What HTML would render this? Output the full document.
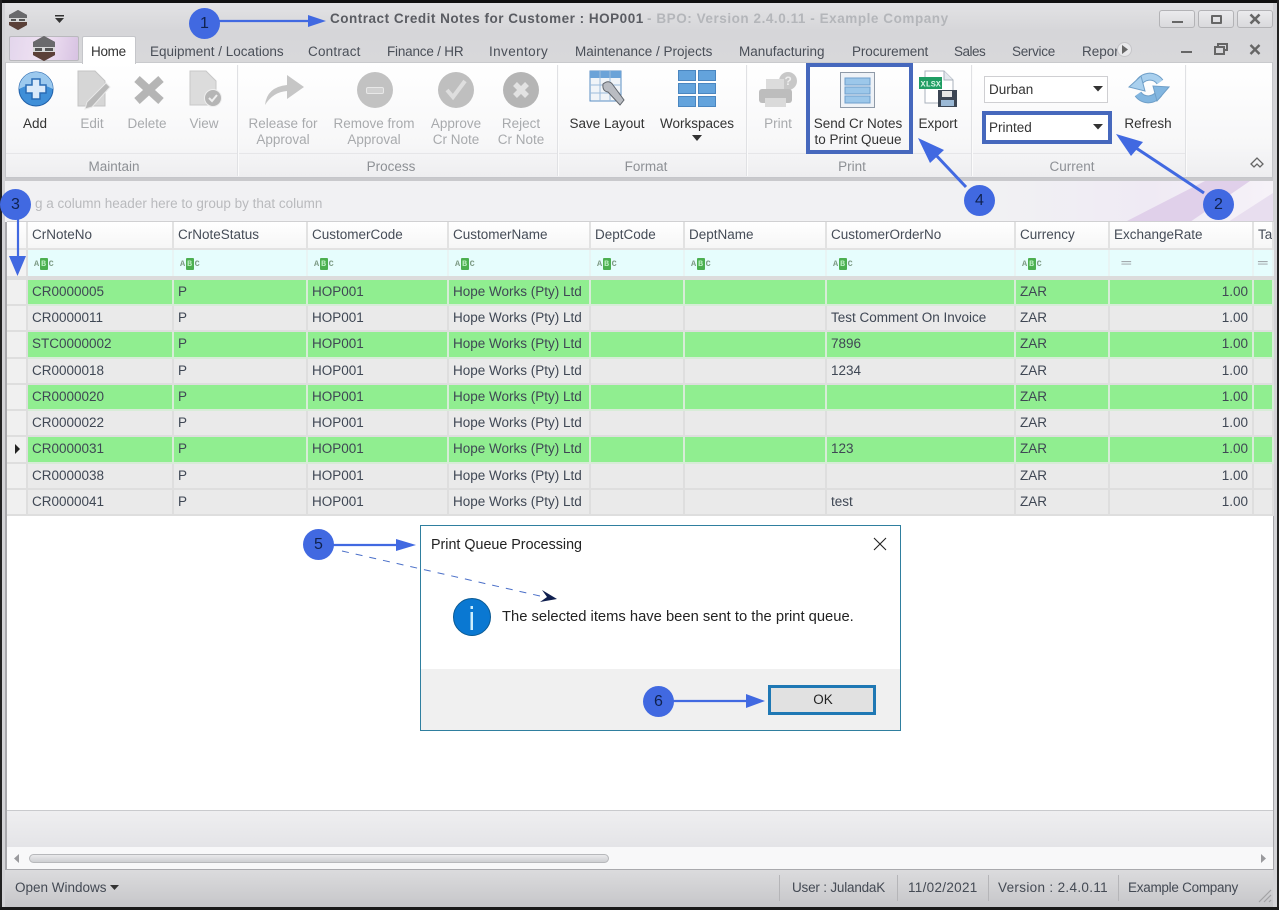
<!DOCTYPE html>
<html><head><meta charset="utf-8"><title>Contract Credit Notes</title>
<style>
*{box-sizing:border-box}
html,body{margin:0;padding:0}
body{width:1279px;height:910px;position:relative;overflow:hidden;background:#fff;font-family:"Liberation Sans",sans-serif;font-size:13.5px;color:#3e4652}
#w{position:absolute;left:0;top:0;width:1279px;height:910px;overflow:hidden;filter:blur(.3px)}
.a{position:absolute}
.t{position:absolute;white-space:nowrap;line-height:16px}
.c{position:absolute;white-space:nowrap;line-height:16px;text-align:center;transform:translateX(-50%)}
.g{color:#a8aaad}
.gl{color:#8d9095}
.sep{position:absolute;top:65px;width:2px;height:111px;background:#e0e1e4;border-right:1px solid #fbfbfb}
.tab{position:absolute;top:44px;line-height:16px;white-space:nowrap;color:#4a4f58}
table{position:absolute;left:7px;top:222px;width:1266px;border-collapse:collapse;table-layout:fixed;font-size:13.5px}
td{padding:0 0 0 4px;border:1px solid #dcdcdc;border-width:0 2px 2px 0;white-space:nowrap;overflow:hidden;height:26.25px;line-height:24px;color:#3f4754}
tr.h td{height:27px;background:linear-gradient(#fff,#f6f6f6);border-color:#e2e2e2;color:#454c57}
tr.f td{height:29px;background:#e6fdfd;border-color:#e8f4f4;border-bottom:4px solid #dcdcdc}
tr.y td{background:#90ee90;border-color:#d7ecd7}
tr.n td{background:#eaeaea;border-color:#dedede}
td.i{background:#f0f0f0!important;border-color:#dedede!important}
td.r{text-align:right;padding-right:4px}
.abc{display:inline-block;font:bold 8.5px/12px "Liberation Mono",monospace;color:#7d9a84;vertical-align:1px;margin-left:2px;letter-spacing:-.5px}
.abc b{display:inline-block;background:#4caf50;color:#b9ecbf;width:8px;height:12px;text-align:center;border-radius:1px;margin:0 1px;letter-spacing:0}
.num{position:absolute;width:31px;height:31px;border-radius:50%;background:#4169e1;color:#10224f;text-align:center;line-height:31px;font-size:16px}
</style></head><body><div id="w">

<!-- window chrome -->
<div class="a" style="left:0;top:0;width:1279px;height:30px;background:linear-gradient(#e4e4e6,#d6d6d9)"></div>
<div class="a" style="left:0;top:30px;width:1279px;height:33px;background:linear-gradient(#d6d6d9,#d8d8da)"></div>
<div class="a" style="left:5px;top:62px;width:1268px;height:116px;background:linear-gradient(#fff,#f7f7f8 70%,#eeeef0);border:1px solid #c5c6ca;border-top:1px solid #c9cacd"></div>
<div class="a" style="left:6px;top:153px;width:1180px;height:1px;background:#e6e6e8"></div>
<div class="a" style="left:5px;top:178px;width:1268px;height:44px;background:#f1f1f3;border-top:3px solid #c9c9cc"></div>
<svg class="a" style="left:1000px;top:181px" width="273" height="41"><defs><linearGradient id="pg" x1="0" x2="1" y1="0" y2="0"><stop offset="0" stop-color="#f1f1f3"/><stop offset=".55" stop-color="#efeaf4"/><stop offset="1" stop-color="#f6f2f8"/></linearGradient></defs><rect width="273" height="41" fill="url(#pg)"/><path d="M125 41 L205 0 H250 L190 41Z" fill="#e0d0ea"/><path d="M228 41 L273 12 V41Z" fill="#e8deef"/></svg>
<div class="a" style="left:0;top:0;width:1279px;height:3px;background:#111"></div>
<div class="a" style="left:0;top:0;width:2px;height:910px;background:#222"></div>
<div class="a" style="left:2px;top:3px;width:3px;height:904px;background:#d3d3d6"></div>
<div class="a" style="left:5px;top:222px;width:2px;height:650px;background:#a9a9ad"></div>
<div class="a" style="left:1277px;top:0;width:2px;height:910px;background:#222"></div>
<div class="a" style="left:1273px;top:3px;width:4px;height:904px;background:#d3d3d6"></div>
<div class="a" style="left:1273px;top:222px;width:1px;height:648px;background:#a9a9ad"></div>

<!-- title -->
<svg class="a" style="left:8px;top:9px" width="20" height="22"><path d="M10 1 L19 6 V16 L10 21 L1 16 V6Z" fill="#4a4444"/><path d="M10 1 L19 6 V9 H1 V6Z" fill="#6a6a6c"/><rect x="1" y="9" width="18" height="4" fill="#d8d8d8"/><path d="M3 10 H8 V12 H3Z M11 10 H17 V12 H11Z" fill="#555"/><path d="M1 13 H19 V16 L10 21 L1 16Z" fill="#5a4038"/></svg>
<svg class="a" style="left:54px;top:14px" width="11" height="10"><rect x="1" y="1" width="9" height="1.5" fill="#333"/><path d="M1 4 H10 L5.5 9Z" fill="#333"/></svg>
<div class="t" style="left:330px;top:11px;font-weight:bold;color:#5a5c62;font-size:13.5px;letter-spacing:.51px">Contract Credit Notes for Customer : HOP001</div>
<div class="t" style="left:647px;top:11px;font-weight:bold;color:#b4b6ba;font-size:13.5px;letter-spacing:.55px">- BPO: Version 2.4.0.11 - Example Company</div>
<div class="a" style="left:1159px;top:10px;width:36px;height:18px;border:1px solid #b3b3b6;border-radius:3px;background:linear-gradient(#ebebed,#d9d9dc)"></div>
<div class="a" style="left:1198px;top:10px;width:36px;height:18px;border:1px solid #b3b3b6;border-radius:3px;background:linear-gradient(#ebebed,#d9d9dc)"></div>
<div class="a" style="left:1237px;top:10px;width:36px;height:18px;border:1px solid #b3b3b6;border-radius:3px;background:linear-gradient(#ebebed,#d9d9dc)"></div>
<div class="a" style="left:1172px;top:21px;width:11px;height:2px;background:#666"></div>
<div class="a" style="left:1211px;top:15px;width:11px;height:9px;border:2px solid #666;border-radius:1px"></div>
<svg class="a" style="left:1249px;top:13px" width="12" height="12"><path d="M1.5 1.5 L10.5 10.5 M10.5 1.5 L1.5 10.5" stroke="#666" stroke-width="2.6"/></svg>

<!-- tabs -->
<div class="a" style="left:9px;top:36px;width:70px;height:25px;border:1px solid #b9b9bd;border-radius:2px;background:linear-gradient(100deg,#e3d6ec,#f0e2f3 50%,#d7c2e2)"></div>
<svg class="a" style="left:32px;top:35px" width="24" height="27"><path d="M12 1 L23 7 V20 L12 26 L1 20 V7Z" fill="#4f4a4a"/><path d="M12 1 L23 7 V12 H1 V7Z" fill="#6a6a6c"/><rect x="1" y="12" width="22" height="5" fill="#d8d8d8"/><path d="M3 13 H10 V16 H3Z M13 13 H21 V16 H13Z" fill="#555"/><path d="M1 17 H23 V20 L12 26 L1 20Z" fill="#5c4038"/></svg>
<div class="a" style="left:82px;top:36px;width:54px;height:28px;background:#fff;border:1px solid #c5c6ca;border-bottom:0;border-radius:2px 2px 0 0"></div>
<div class="tab" style="left:91px;color:#333;letter-spacing:-.3px">Home</div>
<div class="tab" style="left:150px">Equipment / Locations</div>
<div class="tab" style="left:308px;letter-spacing:.2px">Contract</div>
<div class="tab" style="left:387px;letter-spacing:-.2px">Finance / HR</div>
<div class="tab" style="left:489px;letter-spacing:.4px">Inventory</div>
<div class="tab" style="left:575px">Maintenance / Projects</div>
<div class="tab" style="left:739px">Manufacturing</div>
<div class="tab" style="left:852px;letter-spacing:-.1px">Procurement</div>
<div class="tab" style="left:954px;letter-spacing:-.5px">Sales</div>
<div class="tab" style="left:1012px;letter-spacing:-.3px">Service</div>
<div class="tab" style="left:1082px">Repor</div>
<div class="a" style="left:1117px;top:42px;width:15px;height:15px;border-radius:50%;background:#e8e8ea;border:1px solid #c5c5c8"></div>
<svg class="a" style="left:1121px;top:45px" width="8" height="9"><path d="M1 0 L7 4.5 L1 9Z" fill="#666"/></svg>
<div class="a" style="left:1181px;top:51px;width:11px;height:2px;background:#666"></div>
<svg class="a" style="left:1214px;top:43px" width="14" height="12"><path d="M4 4 V1 H13 V7 H10 M1 4 H10 V11 H1Z" fill="none" stroke="#666" stroke-width="2"/></svg>
<svg class="a" style="left:1249px;top:44px" width="12" height="11"><path d="M1.5 1 L10.5 10 M10.5 1 L1.5 10" stroke="#666" stroke-width="2.4"/></svg>

<!-- ribbon separators -->
<div class="sep" style="left:237px"></div><div class="sep" style="left:557px"></div><div class="sep" style="left:746px"></div><div class="sep" style="left:971px"></div><div class="sep" style="left:1185px"></div>

<!-- ribbon icons -->
<svg class="a" style="left:18px;top:71px" width="38" height="38"><circle cx="18" cy="18" r="17" fill="#3f8fd8" stroke="#1f5fa8"/><path d="M1 18 A17 17 0 0 1 35 18 Q18 9 1 18Z" fill="#9cc9ee"/><path d="M14 8 H22 V14 H28 V22 H22 V28 H14 V22 H8 V14 H14Z" fill="#dbeafa" stroke="#2a6cb5" stroke-width="1.5"/></svg>
<svg class="a" style="left:76px;top:70px" width="36" height="40"><path d="M2 1 H19 L29 11 V36 H2Z" fill="#d6d6d6" stroke="#c4c4c4"/><path d="M30 13 L34 17 L16 37 L9 39 L11 32Z" fill="#b8b8b8" stroke="#e8e8e8"/></svg>
<svg class="a" style="left:132px;top:72px" width="34" height="34"><path d="M5 7 L29 29 M29 7 L5 29" stroke="#b5b5b5" stroke-width="8"/></svg>
<svg class="a" style="left:189px;top:70px" width="34" height="38"><path d="M1 1 H17 L27 11 V35 H1Z" fill="#dcdcdc" stroke="#c8c8c8"/><circle cx="24" cy="28" r="8.5" fill="#b5b5b5" stroke="#eee"/><path d="M20 28 L23 31 L28 25" stroke="#eee" stroke-width="2" fill="none"/></svg>
<svg class="a" style="left:263px;top:73px" width="42" height="34"><path d="M2 32 Q4 14 24 12 V2 L41 14 L24 26 V18 Q10 19 2 32Z" fill="#c6c6c6"/></svg>
<div class="a" style="left:357px;top:72px;width:36px;height:36px;border-radius:50%;background:#c2c2c2"></div>
<div class="a" style="left:366px;top:87px;width:18px;height:7px;border-radius:2px;background:#d0d0d0;border:1px solid #e8e8e8"></div>
<svg class="a" style="left:438px;top:72px" width="36" height="36"><circle cx="18" cy="18" r="18" fill="#bfbfbf"/><path d="M9 18 L15 25 L27 9" stroke="#dedede" stroke-width="4" fill="none"/></svg>
<svg class="a" style="left:503px;top:72px" width="36" height="36"><circle cx="18" cy="18" r="18" fill="#b5b5b5"/><path d="M12 12 L24 24 M24 12 L12 24" stroke="#e2e2e2" stroke-width="5.5"/></svg>
<svg class="a" style="left:589px;top:70px" width="38" height="38"><rect x="1" y="1" width="31" height="30" fill="#f0f4f8" stroke="#5b8fc4"/><rect x="1" y="1" width="31" height="7" fill="#6ba3d8"/><path d="M1 15 H32 M1 23 H32 M11 1 V31 M21 1 V31" stroke="#9dbcdb"/><path d="M14 14 Q20 9 24 15 L35 30 L31 35 L19 22 Q13 21 14 14Z" fill="#b9bcc2" stroke="#60656c"/></svg>
<svg class="a" style="left:678px;top:70px" width="38" height="38"><g fill="#63a3dc" stroke="#4a86c0"><rect x=".5" y=".5" width="17" height="10"/><rect x="20.5" y=".5" width="17" height="10"/><rect x=".5" y="13.5" width="17" height="10"/><rect x="20.5" y="13.5" width="17" height="10"/><rect x=".5" y="26.5" width="17" height="10"/><rect x="20.5" y="26.5" width="17" height="10"/></g></svg>
<svg class="a" style="left:758px;top:71px" width="40" height="38"><circle cx="30" cy="10" r="9" fill="#c8c8c8"/><text x="26.5" y="14" font-size="12" font-weight="bold" fill="#eee" font-family="Liberation Sans">?</text><rect x="8" y="8" width="18" height="14" fill="#dcdcdc"/><rect x="1" y="18" width="33" height="14" rx="3" fill="#bdbdbd"/><rect x="7" y="27" width="21" height="9" fill="#dadada"/></svg>
<svg class="a" style="left:840px;top:72px" width="36" height="37"><rect x=".5" y=".5" width="34" height="35" fill="#eef2f7" stroke="#8f9aa8"/><rect x="5" y="6" width="25" height="7" fill="#9cc7ea" stroke="#6e9fcc"/><rect x="5" y="15" width="25" height="7" fill="#9cc7ea" stroke="#6e9fcc"/><rect x="5" y="24" width="25" height="7" fill="#9cc7ea" stroke="#6e9fcc"/></svg>
<svg class="a" style="left:918px;top:70px" width="40" height="40"><path d="M7 1 H26 L35 10 V33 H7Z" fill="#fff" stroke="#aab2bc"/><path d="M26 1 V10 H35" fill="#e4e8ee" stroke="#aab2bc"/><rect x="1" y="7" width="23" height="12" fill="#1f9d63"/><text x="2.500" y="16.5" font-size="8.500" font-weight="bold" fill="#d6f5e4" font-family="Liberation Mono">XLSX</text><rect x="20" y="20" width="19" height="17" fill="#3c4654"/><rect x="24" y="21" width="10" height="6" fill="#e6e6e6"/><rect x="23" y="30" width="13" height="6" fill="#9bb9d6"/></svg>
<svg class="a" style="left:1128px;top:72px" width="42" height="34">
<g fill="none" stroke="#6f9fc8" stroke-width="8"><path d="M10 13 A12.500 12.500 0 0 1 32 10"/><path d="M32 19 A12.500 12.500 0 0 1 10 22"/></g>
<g fill="none" stroke-width="6"><path d="M10 13 A12.500 12.500 0 0 1 32 10" stroke="#a9d0ee"/><path d="M32 19 A12.500 12.500 0 0 1 10 22" stroke="#82b6e0"/></g>
<path d="M1 15 L13 4 L17 19Z" fill="#a9d0ee" stroke="#6f9fc8"/><path d="M41 15 L29 29 L25 14Z" fill="#82b6e0" stroke="#6f9fc8"/></svg>

<!-- ribbon labels -->
<div class="c" style="left:35px;top:116px;color:#333">Add</div>
<div class="c g" style="left:92px;top:116px">Edit</div>
<div class="c g" style="left:147px;top:116px">Delete</div>
<div class="c g" style="left:204px;top:116px">View</div>
<div class="c g" style="left:283px;top:116px">Release for<br>Approval</div>
<div class="c g" style="left:374px;top:116px">Remove from<br>Approval</div>
<div class="c g" style="left:456px;top:116px">Approve<br>Cr Note</div>
<div class="c g" style="left:521px;top:116px">Reject<br>Cr Note</div>
<div class="c" style="left:607px;top:116px;color:#333">Save Layout</div>
<div class="c" style="left:697px;top:116px;color:#333">Workspaces</div>
<svg class="a" style="left:692px;top:135px" width="10" height="6"><path d="M0 0 H10 L5 6Z" fill="#333"/></svg>
<div class="c g" style="left:778px;top:116px">Print</div>
<div class="c" style="left:858px;top:116px;color:#333">Send Cr Notes<br>to Print Queue</div>
<div class="c" style="left:938px;top:116px;color:#333">Export</div>
<div class="c" style="left:1148px;top:116px;color:#333">Refresh</div>
<div class="c gl" style="left:114px;top:159px">Maintain</div>
<div class="c gl" style="left:391px;top:159px">Process</div>
<div class="c gl" style="left:646px;top:159px">Format</div>
<div class="c gl" style="left:852px;top:159px">Print</div>
<div class="c gl" style="left:1072px;top:159px">Current</div>
<svg class="a" style="left:1249px;top:156px" width="16" height="14"><path d="M2 8 L8 2 L14 8 L11 11 L8 8 L5 11Z" fill="none" stroke="#666" stroke-width="1.3"/></svg>

<!-- combos -->
<div class="a" style="left:984px;top:76px;width:124px;height:27px;background:#fff;border:1px solid #cfcfd2"></div>
<div class="t" style="left:989px;top:82px;color:#333">Durban</div>
<svg class="a" style="left:1093px;top:86px" width="10" height="6"><path d="M0 0 H10 L5 5.5Z" fill="#333"/></svg>
<div class="a" style="left:982px;top:111px;width:130px;height:33px;background:#fff;border:4px solid #4668bd"></div>
<div class="t" style="left:989px;top:120px;color:#333">Printed</div>
<svg class="a" style="left:1093px;top:124px" width="10" height="6"><path d="M0 0 H10 L5 5.5Z" fill="#333"/></svg>
<div class="a" style="left:806px;top:63px;width:107px;height:91px;border:4px solid #4668bd"></div>

<div class="t" style="left:35px;top:196px;color:#b9babd">g a column header here to group by that column</div>

<!-- grid -->
<table>
<colgroup><col style="width:20px"><col style="width:146px"><col style="width:134px"><col style="width:141px"><col style="width:142px"><col style="width:94px"><col style="width:142px"><col style="width:189px"><col style="width:94px"><col style="width:144px"><col style="width:20px"></colgroup>
<tr class="h"><td></td><td>CrNoteNo</td><td>CrNoteStatus</td><td>CustomerCode</td><td>CustomerName</td><td>DeptCode</td><td>DeptName</td><td>CustomerOrderNo</td><td>Currency</td><td>ExchangeRate</td><td>Ta</td></tr>
<tr class="f"><td class="i" style="background:#f3f3f3!important"></td><td><span class="abc">A<b>B</b>C</span></td><td><span class="abc">A<b>B</b>C</span></td><td><span class="abc">A<b>B</b>C</span></td><td><span class="abc">A<b>B</b>C</span></td><td><span class="abc">A<b>B</b>C</span></td><td><span class="abc">A<b>B</b>C</span></td><td><span class="abc">A<b>B</b>C</span></td><td><span class="abc">A<b>B</b>C</span></td><td><span style="color:#9a9fa3">&nbsp;&nbsp;═</span></td><td><span style="color:#9a9fa3">═</span></td></tr>
<tr class="y"><td class="i"></td><td>CR0000005</td><td>P</td><td>HOP001</td><td>Hope Works (Pty) Ltd</td><td></td><td></td><td></td><td>ZAR</td><td class="r">1.00</td><td></td></tr>
<tr class="n"><td class="i"></td><td>CR0000011</td><td>P</td><td>HOP001</td><td>Hope Works (Pty) Ltd</td><td></td><td></td><td>Test Comment On Invoice</td><td>ZAR</td><td class="r">1.00</td><td></td></tr>
<tr class="y"><td class="i"></td><td>STC0000002</td><td>P</td><td>HOP001</td><td>Hope Works (Pty) Ltd</td><td></td><td></td><td>7896</td><td>ZAR</td><td class="r">1.00</td><td></td></tr>
<tr class="n"><td class="i"></td><td>CR0000018</td><td>P</td><td>HOP001</td><td>Hope Works (Pty) Ltd</td><td></td><td></td><td>1234</td><td>ZAR</td><td class="r">1.00</td><td></td></tr>
<tr class="y"><td class="i"></td><td>CR0000020</td><td>P</td><td>HOP001</td><td>Hope Works (Pty) Ltd</td><td></td><td></td><td></td><td>ZAR</td><td class="r">1.00</td><td></td></tr>
<tr class="n"><td class="i"></td><td>CR0000022</td><td>P</td><td>HOP001</td><td>Hope Works (Pty) Ltd</td><td></td><td></td><td></td><td>ZAR</td><td class="r">1.00</td><td></td></tr>
<tr class="y"><td class="i"></td><td>CR0000031</td><td>P</td><td>HOP001</td><td>Hope Works (Pty) Ltd</td><td></td><td></td><td>123</td><td>ZAR</td><td class="r">1.00</td><td></td></tr>
<tr class="n"><td class="i"></td><td>CR0000038</td><td>P</td><td>HOP001</td><td>Hope Works (Pty) Ltd</td><td></td><td></td><td></td><td>ZAR</td><td class="r">1.00</td><td></td></tr>
<tr class="n"><td class="i"></td><td>CR0000041</td><td>P</td><td>HOP001</td><td>Hope Works (Pty) Ltd</td><td></td><td></td><td>test</td><td>ZAR</td><td class="r">1.00</td><td></td></tr>
</table>
<div class="a" style="left:7px;top:221px;width:1266px;height:1px;background:#d0d0d2"></div>
<svg class="a" style="left:14px;top:444px" width="7" height="10"><path d="M1 0 L6 5 L1 10Z" fill="#222"/></svg>

<!-- bottom -->
<div class="a" style="left:7px;top:810px;width:1266px;height:37px;background:linear-gradient(#eeeef0,#e4e4e7);border-top:1px solid #c9cacd"></div>
<div class="a" style="left:7px;top:847px;width:1266px;height:23px;background:#f8f8f9"></div>
<div class="a" style="left:29px;top:854px;width:580px;height:9px;border:1px solid #b7b8bb;border-radius:5px;background:linear-gradient(#e9e9eb,#cfd0d3)"></div>
<svg class="a" style="left:14px;top:854px" width="6" height="9"><path d="M5 0 V9 L0 4.5Z" fill="#9a9a9d"/></svg>
<svg class="a" style="left:1261px;top:854px" width="6" height="9"><path d="M0 0 V9 L5 4.5Z" fill="#9a9a9d"/></svg>
<div class="a" style="left:5px;top:869px;width:1268px;height:38px;background:linear-gradient(#dbdbdd,#c6c6c9);border-top:1px solid #a9a9ad"></div>
<div class="a" style="left:0;top:907px;width:1279px;height:3px;background:#1a1a1a"></div>
<div class="t" style="left:15px;top:880px;color:#444a54">Open Windows</div>
<svg class="a" style="left:110px;top:885px" width="9" height="6"><path d="M0 0 H9 L4.5 5Z" fill="#333"/></svg>
<div class="a" style="left:779px;top:875px;width:1px;height:26px;background:#b5b5b8"></div>
<div class="a" style="left:897px;top:875px;width:1px;height:26px;background:#b5b5b8"></div>
<div class="a" style="left:988px;top:875px;width:1px;height:26px;background:#b5b5b8"></div>
<div class="a" style="left:1118px;top:875px;width:1px;height:26px;background:#b5b5b8"></div>
<div class="t" style="left:792px;top:880px;color:#444a54;letter-spacing:-.2px">User : JulandaK</div>
<div class="t" style="left:908px;top:880px;color:#444a54;letter-spacing:.3px">11/02/2021</div>
<div class="t" style="left:998px;top:880px;color:#444a54;letter-spacing:.33px">Version : 2.4.0.11</div>
<div class="t" style="left:1128px;top:880px;color:#444a54;letter-spacing:-.27px">Example Company</div>
<svg class="a" style="left:1258px;top:888px" width="14" height="15"><path d="M1 14 L13 2 M6 14 L13 7 M11 14 L13 12" stroke="#a2a2a5" stroke-width="1.2"/></svg>

<!-- dialog -->
<div class="a" style="left:420px;top:525px;width:481px;height:206px;background:#fff;border:1px solid #2f7f9f"></div>
<div class="a" style="left:421px;top:669px;width:479px;height:61px;background:#f0f0f0"></div>
<div class="t" style="left:431px;top:537px;color:#222;font-size:14.3px">Print Queue Processing</div>
<svg class="a" style="left:873px;top:537px" width="14" height="14"><path d="M1 1 L13 13 M13 1 L1 13" stroke="#222" stroke-width="1.1"/></svg>
<svg class="a" style="left:453px;top:597px" width="38" height="40"><ellipse cx="19" cy="20" rx="18.500" ry="18.500" fill="#0a78d2" stroke="#0a5a94"/><rect x="17.500" y="9" width="2.500" height="3" fill="#cdeefc"/><rect x="17.500" y="15" width="2.500" height="18" fill="#cdeefc"/></svg>
<div class="t" style="left:502px;top:609px;color:#222;font-size:14.75px">The selected items have been sent to the print queue.</div>
<div class="a" style="left:768px;top:685px;width:108px;height:30px;background:#e1e1e1;border:3px solid #1f78b4"></div>
<div class="c" style="left:823px;top:692px;color:#222">OK</div>

<!-- annotations -->
<svg class="a" style="left:0;top:0" width="1279" height="910">
<g stroke="#4169e1" stroke-width="2.200" fill="#4169e1">
<path d="M215 21 H310"/><path d="M308 15 L326 21 L308 27Z" stroke="none"/>
<path d="M18 215 V258"/><path d="M9 256 H26 L17.500 276Z" stroke="none"/>
<path d="M333 545 H398"/><path d="M396 539 L416 545 L396 551Z" stroke="none"/>
<path d="M672 701 H748"/><path d="M746 694 L765 701 L746 708Z" stroke="none"/>
<path d="M1204 193 L1133 146" stroke-width="3"/><path d="M1116 134 L1143 142 L1131 156Z" stroke="none"/>
<path d="M966 187 L933 152" stroke-width="3"/><path d="M918 138 L944 150 L930 163Z" stroke="none"/>
</g>
<path d="M342 551 L540 596" stroke="#4a6fc8" stroke-width="1" stroke-dasharray="7 7" fill="none"/>
<path d="M542 590 L557 599 L540 602 L547 597Z" fill="#101f4f"/>
</svg>
<div class="num" style="left:189px;top:8px">1</div>
<div class="num" style="left:1203px;top:189px">2</div>
<div class="num" style="left:0;top:189px">3</div>
<div class="num" style="left:964px;top:185px">4</div>
<div class="num" style="left:303px;top:529px">5</div>
<div class="num" style="left:643px;top:686px">6</div>
</div></body></html>
